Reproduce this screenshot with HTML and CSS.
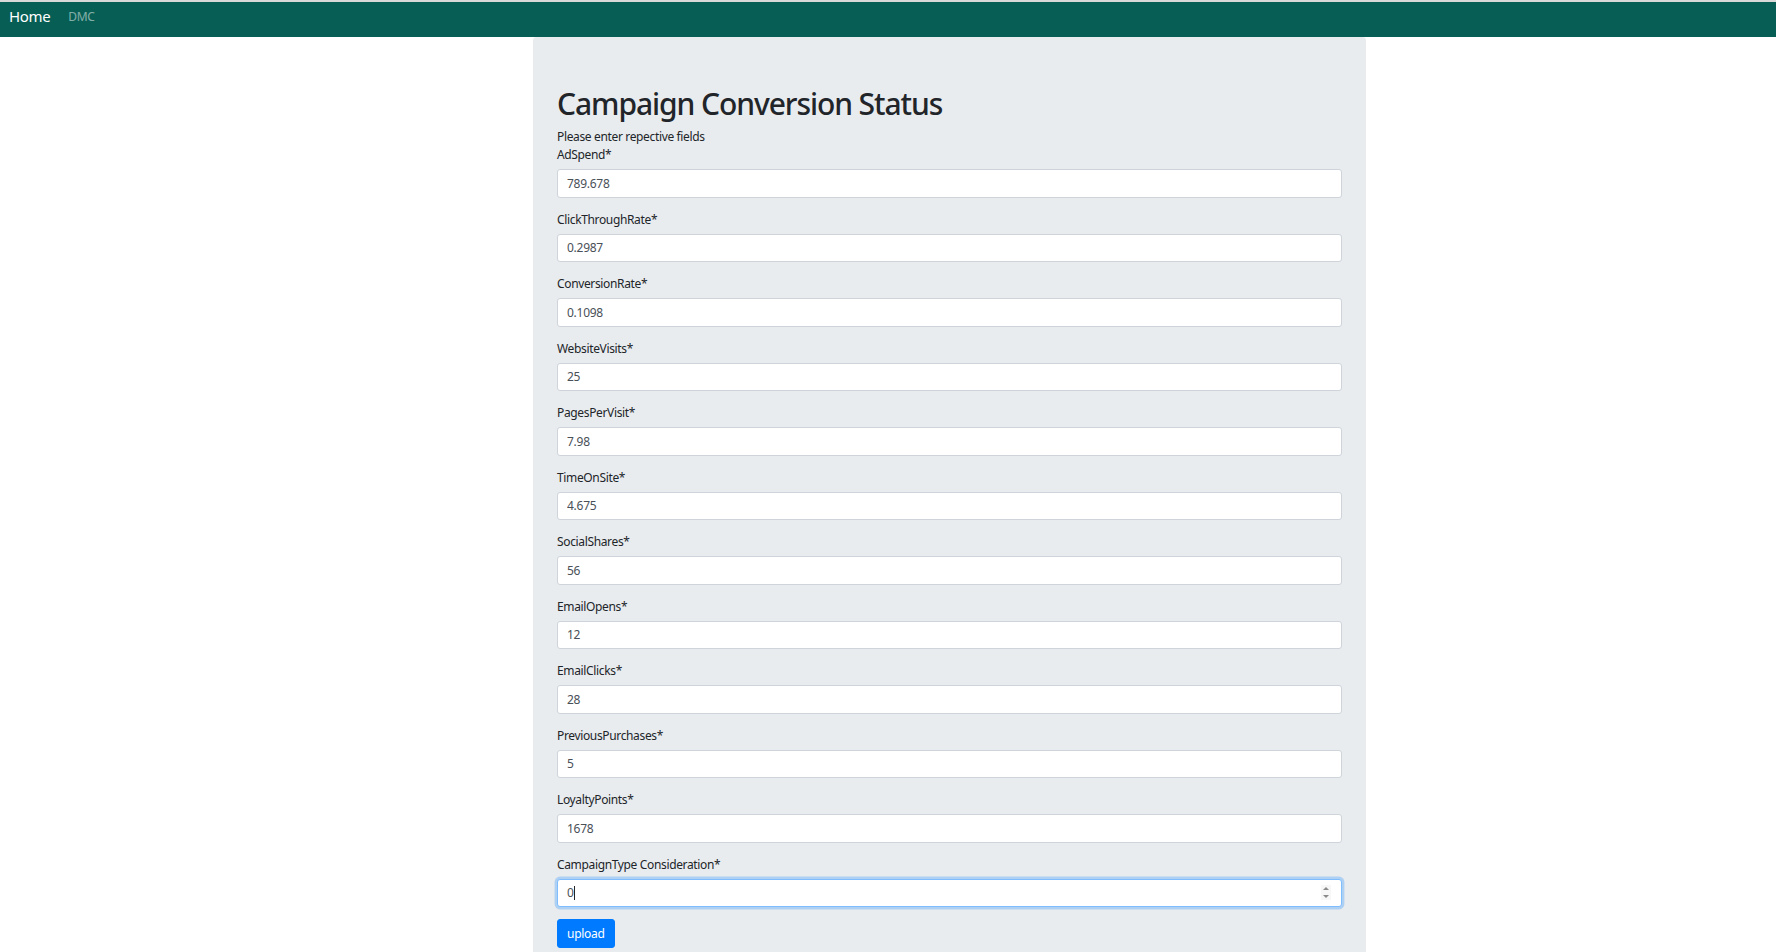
FILE: index.html
```html
<!DOCTYPE html>
<html lang="en">
<head>
<meta charset="utf-8">
<title>Campaign Conversion Status</title>
<link rel="stylesheet" href="styles.css">
</head>
<body>
<div class="topline"></div>
<nav class="navbar">
  <a class="brand" href="#">Home</a>
  <a class="nav-link" href="#">DMC</a>
</nav>
<main class="container">
  <section class="jumbotron">
    <h1 class="title">Campaign Conversion Status</h1>
    <p class="lead-text">Please enter repective fields</p>
    <form class="form">
      <div class="form-group"><label class="label">AdSpend*</label><input class="control" type="text" value="789.678"></div>
      <div class="form-group"><label class="label">ClickThroughRate*</label><input class="control" type="text" value="0.2987"></div>
      <div class="form-group"><label class="label">ConversionRate*</label><input class="control" type="text" value="0.1098"></div>
      <div class="form-group"><label class="label">WebsiteVisits*</label><input class="control" type="text" value="25"></div>
      <div class="form-group"><label class="label">PagesPerVisit*</label><input class="control" type="text" value="7.98"></div>
      <div class="form-group"><label class="label">TimeOnSite*</label><input class="control" type="text" value="4.675"></div>
      <div class="form-group"><label class="label">SocialShares*</label><input class="control" type="text" value="56"></div>
      <div class="form-group"><label class="label">EmailOpens*</label><input class="control" type="text" value="12"></div>
      <div class="form-group"><label class="label">EmailClicks*</label><input class="control" type="text" value="28"></div>
      <div class="form-group"><label class="label">PreviousPurchases*</label><input class="control" type="text" value="5"></div>
      <div class="form-group"><label class="label">LoyaltyPoints*</label><input class="control" type="text" value="1678"></div>
      <div class="form-group"><label class="label">CampaignType Consideration*</label>
        <div class="field-wrap">
          <input class="control focused" type="text" value="0" autofocus>
          <span class="caret"></span>
          <svg class="spinner" width="10" height="15" viewBox="0 0 10 15" aria-hidden="true">
            <rect x="0" y="0" width="10" height="15" fill="#f7f7f7"/>
            <path d="M2 5 L5 2 L8 5 Z" fill="#8a8a8a"/>
            <path d="M2 10 L5 13 L8 10 Z" fill="#8a8a8a"/>
          </svg>
        </div>
      </div>
      <button class="btn" type="button">upload</button>
    </form>
  </section>
</main>
</body>
</html>
```

FILE: styles.css
```css
* { box-sizing: border-box; }

html, body {
  margin: 0;
  padding: 0;
  background: #ffffff;
  font-family: "Segoe UI", "Noto Sans", "Open Sans", sans-serif;
  letter-spacing: -0.022em;
  color: #212529;
  overflow: hidden;
}

.topline {
  height: 2px;
  background: #d9d9d9;
}

.navbar {
  height: 35px;
  background: #075e54;
  display: flex;
  align-items: flex-start;
  padding: 3px 9px 0;
}

.brand {
  font-size: 15px;
  line-height: 22px;
  color: #ffffff;
  text-decoration: none;
}

.nav-link {
  font-size: 12px;
  line-height: 22px;
  margin-left: 18px;
  margin-top: 1px;
  color: rgba(255, 255, 255, 0.5);
  text-decoration: none;
}

.container {
  width: 833px;
  margin-left: 533px;
}

.jumbotron {
  background: #e9ecef;
  border-radius: 3.6px;
  padding: 48px 24px 60px;
  min-height: 960px;
}

.title {
  margin: 0 0 6px;
  padding-top: 2px;
  font-size: 30px;
  line-height: 34px;
  font-weight: 500;
  letter-spacing: -0.036em;
  color: #212529;
}

.lead-text {
  margin: 0;
  padding-top: 2px;
  font-size: 12px;
  line-height: 16px;
}

.form-group {
  margin-bottom: 12px;
}

.label {
  display: block;
  font-size: 12px;
  padding-top: 2px;
  line-height: 16px;
  margin-bottom: 6px;
}

.control {
  display: block;
  width: 100%;
  height: 28.5px;
  padding: 4.5px 9px;
  font-family: inherit;
  font-size: 12px;
  line-height: 18px;
  letter-spacing: -0.022em;
  color: #495057;
  background: #ffffff;
  border: 1px solid #ced4da;
  border-radius: 3px;
  outline: none;
}

.control.focused {
  border-color: #80bdff;
  box-shadow: 0 0 0 2.4px rgba(0, 123, 255, 0.25);
  caret-color: transparent;
}

.field-wrap {
  position: relative;
}

.caret {
  position: absolute;
  left: 17px;
  top: 7px;
  width: 1px;
  height: 14px;
  background: #212529;
}

.spinner {
  position: absolute;
  right: 11px;
  top: 6.5px;
}

.btn {
  display: inline-block;
  font-family: inherit;
  font-size: 12px;
  line-height: 18px;
  letter-spacing: -0.022em;
  padding: 4.5px 9px;
  color: #ffffff;
  background: #007bff;
  border: 1px solid #007bff;
  border-radius: 3px;
  cursor: pointer;
}
```
